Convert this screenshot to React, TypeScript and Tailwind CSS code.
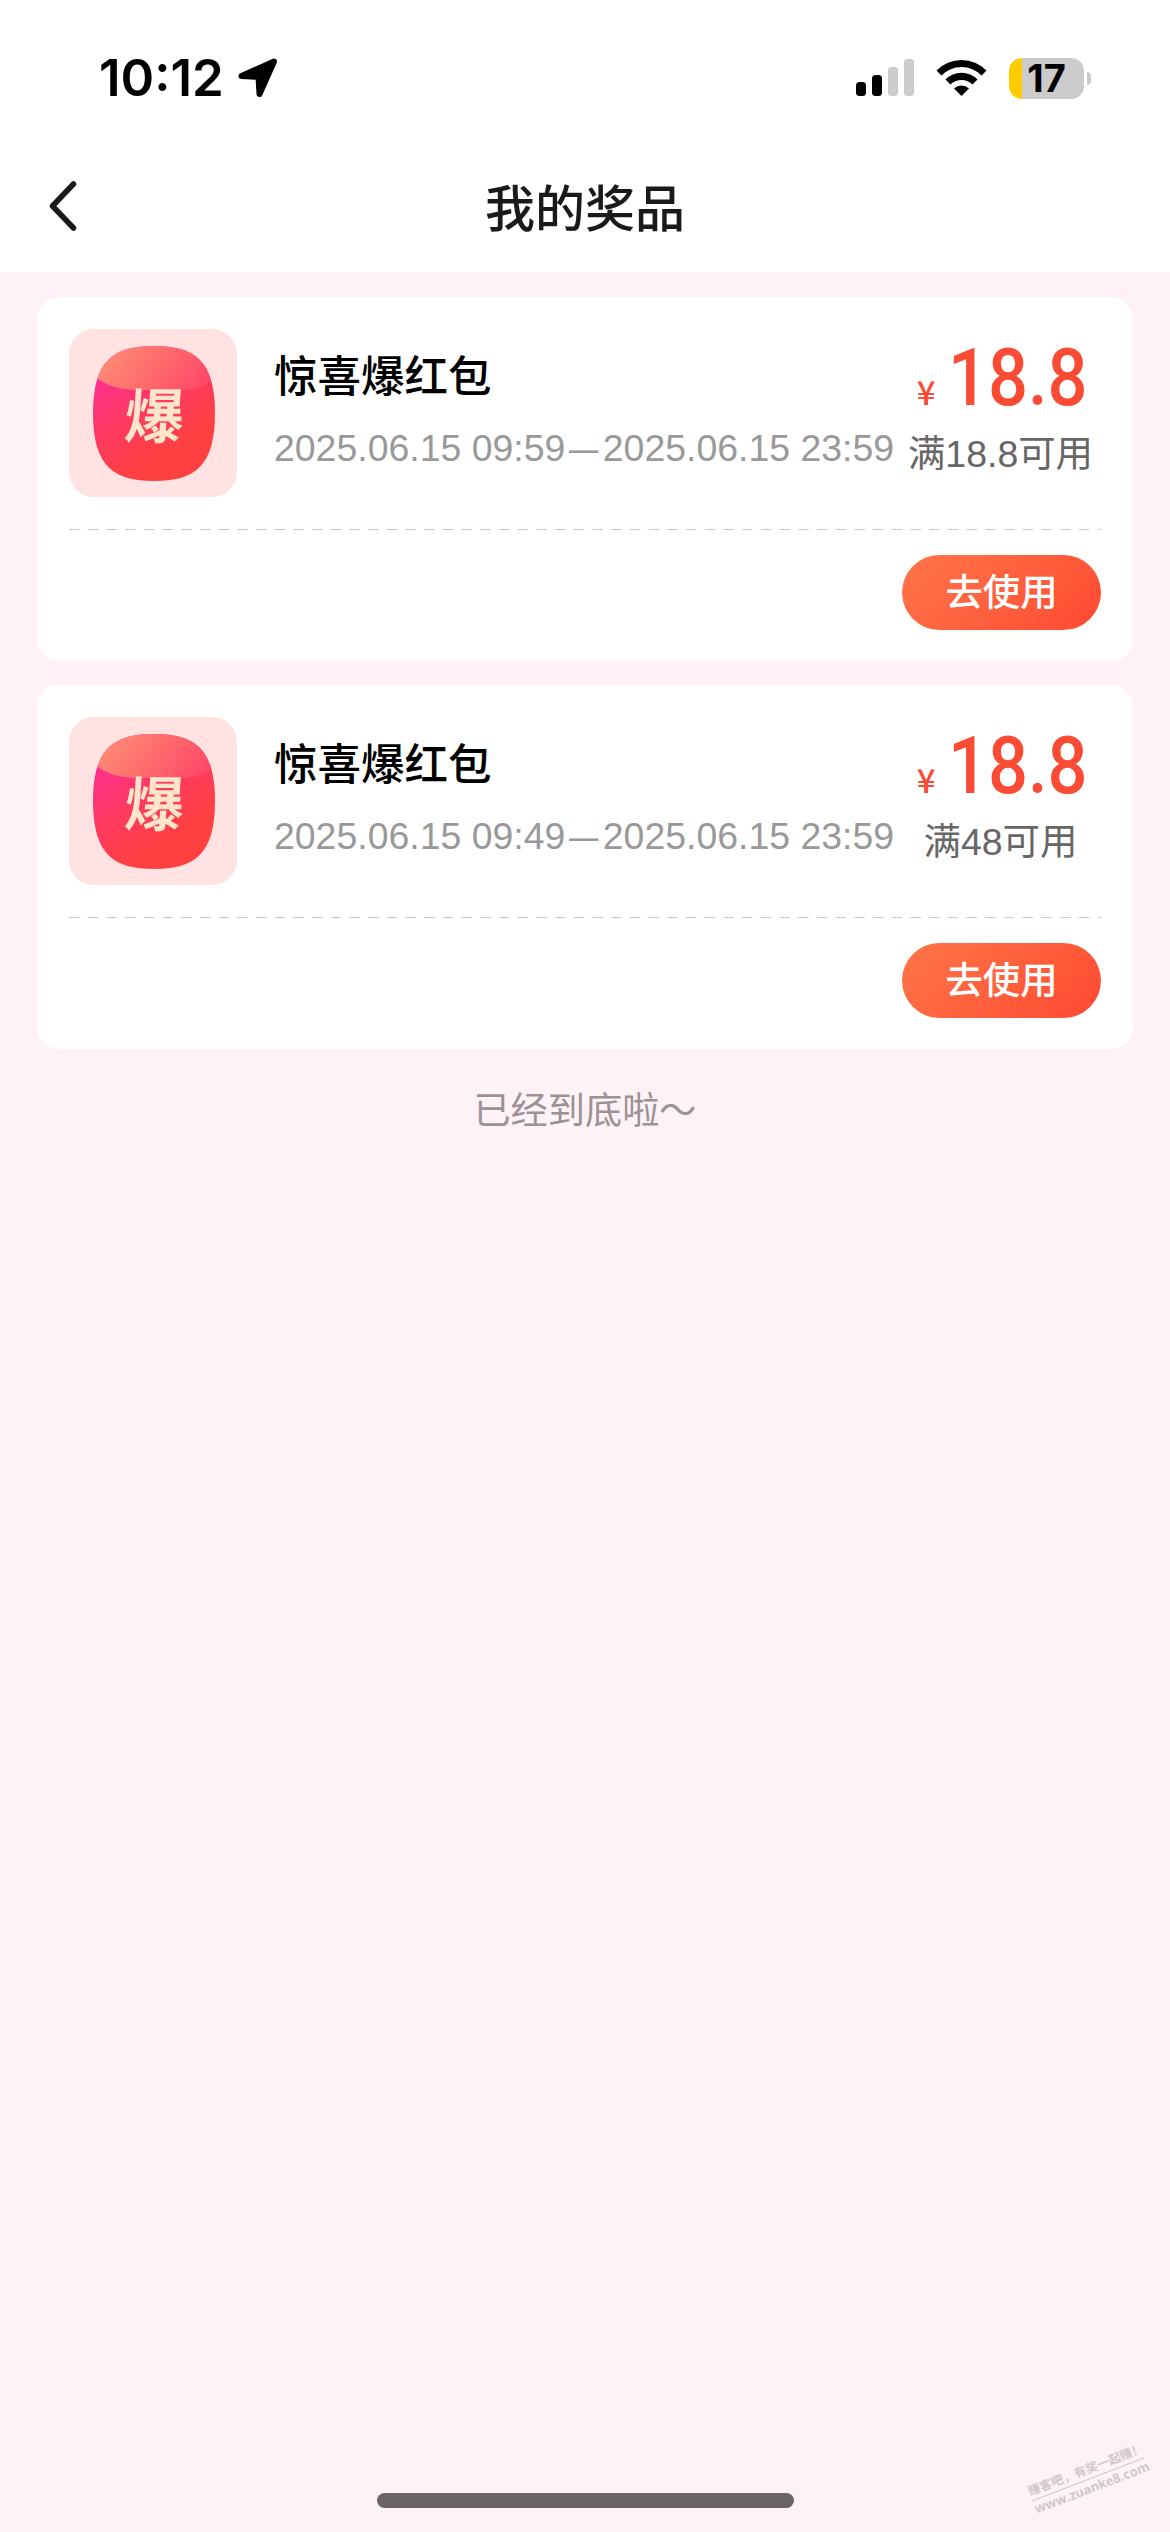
import React from 'react';

type Prize = {
  id: number;
  name: string;
  start: string;
  end: string;
  amount: string;
  condition: string;
};

const prizes: Prize[] = [
  {
    id: 1,
    name: '惊喜爆红包',
    start: '2025.06.15 09:59',
    end: '2025.06.15 23:59',
    amount: '18.8',
    condition: '满18.8可用',
  },
  {
    id: 2,
    name: '惊喜爆红包',
    start: '2025.06.15 09:49',
    end: '2025.06.15 23:59',
    amount: '18.8',
    condition: '满48可用',
  },
];

const StatusBar = () => (
  <div className="flex h-[156px] items-center justify-between pl-[99px] pr-[79px]">
    <div className="flex items-center gap-[14px]">
      <span className="font-['Inter'] text-[51px] font-semibold leading-[60px] text-black">10:12</span>
      <svg width="40" height="40" viewBox="0 0 40 40">
        <path
          d="M3.5 18 L36 3.5 L21.5 36 L20.5 19 Z"
          fill="#000"
          stroke="#000"
          strokeWidth="6"
          strokeLinejoin="round"
        />
      </svg>
    </div>

    <div className="flex items-center">
      <svg width="58" height="38" viewBox="0 0 58 38">
        <rect x="0" y="23" width="10" height="14" rx="3.5" fill="#000" />
        <rect x="16" y="16" width="10" height="21" rx="3.5" fill="#000" />
        <rect x="32" y="8" width="10" height="29" rx="3.5" fill="#cbcbcb" />
        <rect x="48" y="0" width="10" height="37" rx="3.5" fill="#cbcbcb" />
      </svg>
      <svg className="ml-[22px]" width="51" height="38" viewBox="0 0 51 38">
        <path d="M0.5 11.5 A35 35 0 0 1 50.5 11.5 L45.5 16.5 A28 28 0 0 0 5.5 16.5 Z" fill="#000" />
        <path d="M9.5 20.5 A22.5 22.5 0 0 1 41.5 20.5 L36.5 25.5 A15.5 15.5 0 0 0 14.5 25.5 Z" fill="#000" />
        <path d="M18 29.5 A11 11 0 0 1 33 29.5 L25.5 37 Z" fill="#000" />
      </svg>
      <div className="ml-[22px] flex h-[41px] w-[75px] items-center justify-center rounded-[13px] bg-[linear-gradient(90deg,#ffcc00_13.5px,#cbcbcb_13.5px)]">
        <span className="font-['Inter'] text-[38px] font-bold leading-[41px] text-black">17</span>
      </div>
      <div className="ml-[3px] h-[13px] w-[4px] rounded-r-full bg-[#cbcbcb]" />
    </div>
  </div>
);

const Header = () => (
  <div className="grid h-[116px] grid-cols-3 items-center pb-[12px]">
    <button className="pb-[4px] pl-[49px]">
      <svg width="28" height="52" viewBox="0 0 28 52">
        <path
          d="M24.5 4 L3.5 26 L24.5 48"
          fill="none"
          stroke="#1a1a1a"
          strokeWidth="5.5"
          strokeLinecap="round"
          strokeLinejoin="round"
        />
      </svg>
    </button>
    <h1 className="pt-[3px] text-center text-[50px] font-medium leading-[60px] text-[#1a1a1a]">我的奖品</h1>
  </div>
);

const PrizeIcon = () => (
  <svg className="shrink-0" width="168" height="168" viewBox="0 0 168 168">
    <defs>
      <linearGradient id="body" x1="0.1" y1="0.2" x2="0.5" y2="0.85">
        <stop offset="0" stopColor="#ff2e92" />
        <stop offset="0.5" stopColor="#ff3a62" />
        <stop offset="1" stopColor="#ff4040" />
      </linearGradient>
      <linearGradient id="flap" x1="0" y1="0.3" x2="1" y2="0.6">
        <stop offset="0" stopColor="#ff9478" />
        <stop offset="0.55" stopColor="#ff6a6c" />
        <stop offset="1" stopColor="#ff4768" />
      </linearGradient>
      <clipPath id="packet">
        <path d="M85 17 C125 17 146 31 146 84 C146 138 125 152 85 152 C45 152 24 138 24 84 C24 31 45 17 85 17 Z" />
      </clipPath>
    </defs>
    <rect width="168" height="168" rx="25" fill="#ffe2e1" />
    <g clipPath="url(#packet)">
      <rect x="20" y="15" width="130" height="140" fill="url(#body)" />
      <path d="M20 42 C34 57 50 61 72 61 L110 61 C130 61 142 56 150 42 V10 H20 Z" fill="url(#flap)" />
    </g>
    <text
      x="0"
      y="0"
      textAnchor="middle"
      transform="translate(84 109) skewX(-4)"
      fontSize="59"
      fontWeight="700"
      fill="#ffe6cb"
    >
      爆
    </text>
  </svg>
);

const PrizeCard = ({ prize }: { prize: Prize }) => (
  <div className="h-[364px] rounded-[22px] bg-white px-8 pt-8">
    <div className="flex h-[168px]">
      <PrizeIcon />
      <div className="ml-[37px] w-[626px] shrink-0 pt-[17px]">
        <h2 className="text-[43.5px] font-medium leading-[62px] text-black">{prize.name}</h2>
        <p className="mt-[12px] whitespace-nowrap text-[37.44px] leading-[56px] text-[#999]">
          {prize.start}
          <span className="inline-block scale-x-[0.78]">—</span>
          {prize.end}
        </p>
      </div>
      <div className="flex grow flex-col items-center whitespace-nowrap pt-[9px]">
        <div className="flex h-[80px] items-baseline text-[#fa4b35]">
          <span className="font-['Noto_Sans_CJK_SC'] text-[33px] font-medium leading-[80px]">¥</span>
          {/* narrow numerals, the margin takes back the width lost by scaling */}
          <span className="-mr-[22px] ml-[12px] origin-left scale-x-[0.88] font-['Roboto'] text-[80px] font-medium leading-[80px]">
            {prize.amount}
          </span>
        </div>
        <p className="mt-[8px] text-[37.44px] leading-[56px] text-[#666]">{prize.condition}</p>
      </div>
    </div>

    <svg className="mt-[31px] block" width="1032" height="2">
      <line x1="0" y1="1.5" x2="1032" y2="1.5" stroke="#c8c8c8" strokeWidth="1" strokeDasharray="10.4 8.3" />
    </svg>

    <div className="mt-[25px] flex justify-end">
      <button className="h-[75px] w-[199px] rounded-full bg-linear-135 from-[#ff7549] to-[#ff4831] pt-[2px] text-[37.4px] font-medium leading-[73px] text-white">
        去使用
      </button>
    </div>
  </div>
);

const App = () => {
  return (
    <div className="relative flex h-[2532px] w-[1170px] flex-col bg-[#fff2f6] font-['Liberation_Sans','Noto_Sans_CJK_SC',sans-serif]">
      <div className="bg-white">
        <StatusBar />
        <Header />
      </div>

      <div className="flex flex-col gap-[24px] px-[37px] pt-[25px]">
        {prizes.map((prize) => (
          <PrizeCard key={prize.id} prize={prize} />
        ))}
      </div>

      <p className="mt-[34px] text-center text-[37.2px] leading-[56px] text-[#9c9195]">已经到底啦～</p>

      {/* Home indicator */}
      <div className="mx-auto mb-[24px] mt-auto h-[15px] w-[417px] rounded-full bg-[#6a6466]" />

      {/* Site watermark */}
      <div className="absolute left-[1028px] top-[2462px] w-[120px] -rotate-[21deg] whitespace-nowrap text-[#d3c6ca]">
        <p className="border-b border-[#d3c6ca] text-[12.3px] font-bold leading-[17px]">赚客吧，有奖一起赚！</p>
        <p className="font-['Open_Sans'] text-[12.9px] font-bold leading-[17px]">www.zuanke8.com</p>
      </div>
    </div>
  );
};

export default App;
